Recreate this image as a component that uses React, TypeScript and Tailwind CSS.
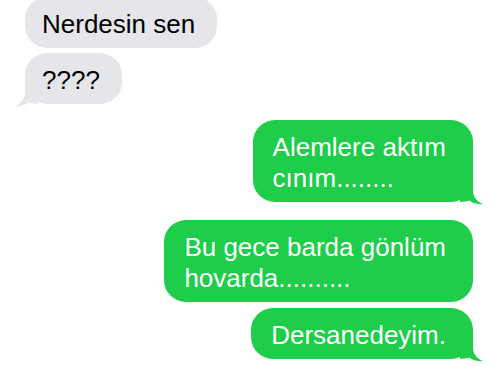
import React from "react";

type Msg = { from: "them" | "me"; lines: string[]; tail?: boolean; gap: string };

const messages: Msg[] = [
    { from: "them", lines: ["Nerdesin sen"], gap: "mt-[-3px]" },
    { from: "them", lines: ["????"], tail: true, gap: "mt-[5px]" },
    { from: "me", lines: ["Alemlere aktım", "cınım........"], tail: true, gap: "mt-[16px]" },
    { from: "me", lines: ["Bu gece barda gönlüm", "hovarda.........."], gap: "mt-[18px]" },
    { from: "me", lines: ["Dersanedeyim."], tail: true, gap: "mt-[6px]" },
];

const Tail = ({ me }: { me: boolean }) => (
    <svg
        width="24"
        height="24"
        viewBox="0 0 24 24"
        className={
            me
                ? "absolute right-[-11px] bottom-[-3px]"
                : "absolute left-[-11px] bottom-[-3px] -scale-x-100"
        }
    >
        <path
            d="M13 0 L13 9 C13 15 16 20.5 23 23 C17.5 23.6 12.5 22.4 9.5 19.6 C6.5 20.6 3 21 0 21 L0 0 Z"
            fill={me ? "#1ecd4a" : "#e5e5ea"}
        />
    </svg>
);

const Bubble = ({ msg }: { msg: Msg }) => {
    const me = msg.from === "me";
    return (
        <div className={`${msg.gap} flex ${me ? "justify-end" : "justify-start"}`}>
            <div
                className={`relative rounded-[22px] pt-[12px] pb-[8px] text-[26px] leading-[31px] whitespace-nowrap ${
                    me
                        ? "bg-[#1ecd4a] text-white pl-[20px] pr-[27px]"
                        : "bg-[#e5e5ea] text-black pl-[17px] pr-[22px]"
                }`}
            >
                {msg.tail && <Tail me={me} />}
                <div className="relative">
                    {msg.lines.map((l, i) => (
                        <div key={i}>{l}</div>
                    ))}
                </div>
            </div>
        </div>
    );
};

export default function App() {
    return (
        <div
            className="w-[500px] h-[366px] overflow-hidden bg-white pl-[25px] pr-[27px] flex flex-col"
            style={{ fontFamily: '"Liberation Sans", Arial, sans-serif' }}
        >
            {messages.map((m, i) => (
                <Bubble key={i} msg={m} />
            ))}
        </div>
    );
}
